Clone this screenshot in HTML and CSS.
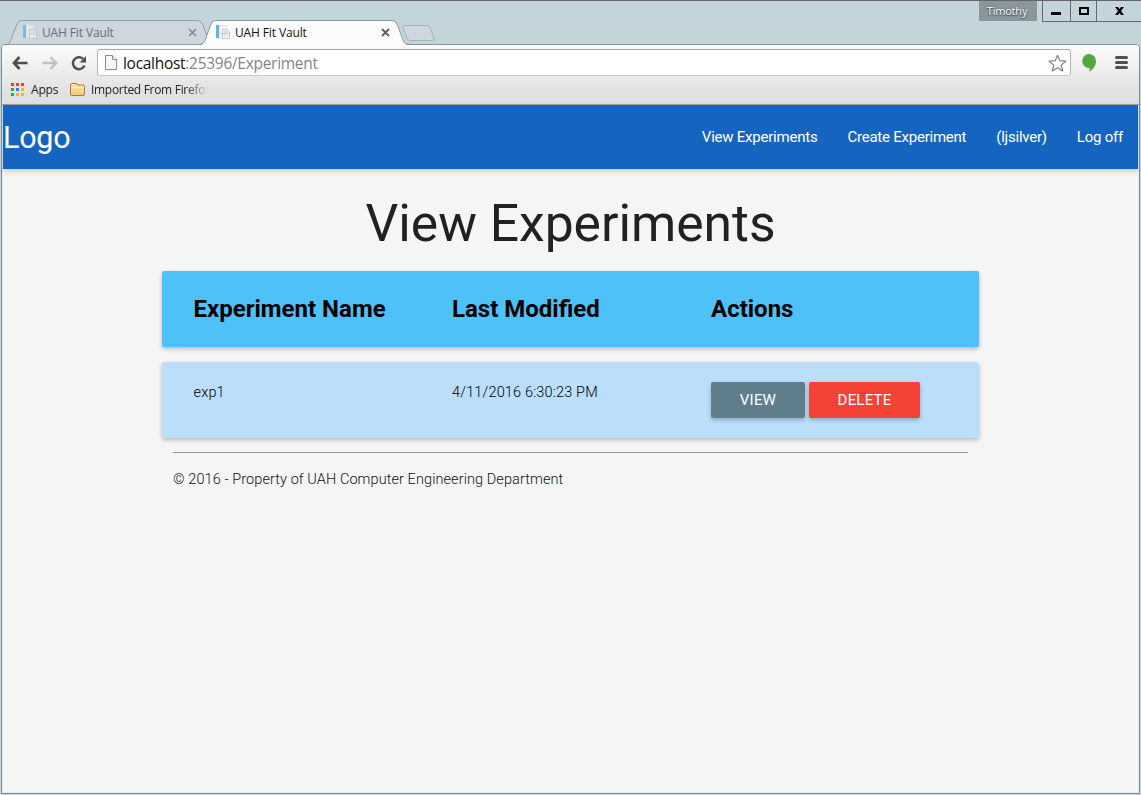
FILE: index.html
```html
<!DOCTYPE html>
<html lang="en">
<head>
<meta charset="utf-8">
<title>UAH Fit Vault</title>
<link rel="stylesheet" href="styles.css">
</head>
<body>
<div class="window">
  <header class="titlebar">
    <div class="tabs">
      <svg class="tab-shapes" width="445" height="26" viewBox="0 0 445 26">
        <path d="M404 5.500h23q2.500 0 3.300 2l3.500 10.500q.8 2.500-2 2.500h-21.500q-2.300 0-3.200-2l-4-10.500q-.9-2.500.9-2.500z" fill="#ced7df" stroke="#a3b0b8"/>
        <path d="M7.500 24.500q1.800-.5 3-4L17 4Q18.300.5 21.500.5H197q4 0 5.500 3.500L210 24.500z" fill="#ced6de" stroke="#8f9fa6"/>
        <path d="M200 25.500q3.500-1 5-5l5.500-15.500q1.700-4.500 5-4.500H392q3.500 0 5 3.500l6.500 17q1.500 3.500 5 4.500z" fill="#fcfcfc"/>
        <path d="M198 24.500h2q3.500 0 5-4l5.500-15.500q1.700-4.500 5-4.500H392q3.500 0 5 3.500l6.500 17q1.500 3.500 5 3.500H445" fill="none" stroke="#87979c"/>
      </svg>
      <div class="tab">
        <svg class="favicon" width="16" height="16" viewBox="0 0 16 16"><path d="M1 1h3v13H1z" fill="#85b6d6"/><path d="M4.500 1.500h7v12h-7z" fill="#e3e8ed" stroke="#d9dfe5"/><path d="M7.500 5.500h5l2 2v7h-7z" fill="#e5e9ee" stroke="#bfc7d0"/><path d="M9 8h4M6 10h7" stroke="#bdc8d2"/></svg>
        <span class="tab-name">UAH Fit Vault</span>
        <svg class="close" width="9" height="9" viewBox="0 0 9 9"><path d="M1 1l7 7M8 1L1 8" stroke="#81888d" stroke-width="1.600"/></svg>
      </div>
      <div class="tab tab-active">
        <svg class="favicon" width="16" height="16" viewBox="0 0 16 16"><path d="M1 1h3v13H1z" fill="#70afd5"/><path d="M4.500 1.500h7v12h-7z" fill="#f1f4f7" stroke="#dfe4e9"/><path d="M7.500 5.500h5l2 2v7h-7z" fill="#edf0f3" stroke="#c5ccd4"/><path d="M9 8h4M6 10h7" stroke="#bdc8d2"/></svg>
        <span class="tab-name">UAH Fit Vault</span>
        <svg class="close" width="9" height="9" viewBox="0 0 9 9"><path d="M1 1l7 7M8 1L1 8" stroke="#5c5c5c" stroke-width="1.800"/></svg>
      </div>
    </div>
    <div class="user">Timothy</div>
    <div class="controls">
      <span class="control minimize"><svg width="10" height="10" viewBox="0 0 10 10"><path d="M0 6h10v3H0z"/></svg></span>
      <span class="control maximize"><svg width="10" height="8" viewBox="0 0 10 8"><path d="M0 0h10v8H0zM2 2v4h6V2z" fill-rule="evenodd"/></svg></span>
      <span class="control quit"><svg width="9" height="8" viewBox="0 0 9 8"><path d="M0 0h3l1.500 2L6 0h3L6 4l3 4H6L4.500 6 3 8H0l3-4z"/></svg></span>
    </div>
  </header>
  <div class="frame">
    <div class="chrome">
      <div class="toolbar">
        <svg class="back" width="16" height="14" viewBox="0 0 16 14"><path d="M7.500 1L2 7l5.500 6M2 7h13.500" fill="none" stroke="#4d4d4d" stroke-width="2.700"/></svg>
        <svg class="forward" width="16" height="14" viewBox="0 0 16 14"><path d="M8.500 1L14 7l-5.500 6M14 7H.5" fill="none" stroke="#c1c1c1" stroke-width="2.500"/></svg>
        <svg class="reload" width="16" height="16" viewBox="0 0 16 16"><path d="M13.500 10.500A6 6 0 1 1 12 3.700" fill="none" stroke="#505050" stroke-width="2.500"/><path d="M15 1v6.500H8.500z" fill="#505050"/></svg>
        <div class="omnibox">
          <svg class="page-icon" width="12" height="15" viewBox="0 0 12 15"><path d="M.5.5h7l4 4v10H.5z" fill="#f7f7f7" stroke="#8b8b8b"/><path d="M7.500.5v4h4" fill="#fff" stroke="#8b8b8b"/></svg>
          <span class="url"><span class="host">localhost</span>:25396/Experiment</span>
          <svg class="star" width="19" height="18" viewBox="0 0 19 18"><path d="M9.500 1.200l2.300 5.500 6 .5-4.600 3.900 1.500 5.900-5.200-3.200L4.300 17l1.500-5.900L1.200 7.200l6-.5z" fill="#fff" stroke="#858585" stroke-width="1.200" stroke-linejoin="round"/></svg>
        </div>
        <svg class="hangouts" width="14" height="18" viewBox="0 0 14 18"><path d="M7 0a7 7 0 0 1 7 7c0 4.500-3 8-6.500 11v-4A7 7 0 1 1 7 0z" fill="#53a93f"/></svg>
        <svg class="menu" width="13" height="13" viewBox="0 0 13 13"><path d="M0 1.500Q0 0 1.500 0h10Q13 0 13 1.500T11.500 3h-10Q0 3 0 1.500M0 6.500Q0 5 1.500 5h10q1.500 0 1.500 1.500T11.500 8h-10Q0 8 0 6.500M0 11.500Q0 10 1.500 10h10q1.500 0 1.500 1.500T11.500 13h-10Q0 13 0 11.500" fill="#505050"/></svg>
      </div>
      <div class="bookmarks">
        <svg class="apps" width="13" height="13" viewBox="0 0 13 13"><path d="M0 0h3v3H0zM5 0h3v3H5zM10 0h3v3h-3z" fill="#ed3b3b"/><path d="M0 5h3v3H0zM0 10h3v3H0z" fill="#2da456"/><path d="M5 5h3v3H5z" fill="#2383f0"/><path d="M10 5h3v3h-3zM5 10h3v3H5zM10 10h3v3h-3z" fill="#f7b51b"/></svg>
        <span class="apps-label">Apps</span>
        <svg class="folder" width="15" height="13" viewBox="0 0 15 13"><defs><linearGradient id="paper" x2="0" y2="1"><stop stop-color="#ffe7a9"/><stop offset="1" stop-color="#f4c779"/></linearGradient></defs><path d="M.5 11V2Q.5.5 2 .5h4Q7.500.5 7.500 2H13q1.500 0 1.500 1.500V11q0 1.500-1.500 1.500H2Q.5 12.500.5 11z" fill="url(#paper)" stroke="#a9793b"/><path d="M1.500 4.500h12" stroke="#fff2cf"/></svg>
        <span class="folder-label">Imported From Firefox</span>
      </div>
    </div>
    <div class="page">
      <nav class="nav">
        <span class="logo">Logo</span>
        <span class="link link-view">View Experiments</span>
        <span class="link link-create">Create Experiment</span>
        <span class="link link-user">(ljsilver)</span>
        <span class="link link-logoff">Log off</span>
      </nav>
      <main class="container">
        <h1 class="title">View Experiments</h1>
        <section class="card card-head">
          <h2 class="heading heading-name">Experiment Name</h2>
          <h2 class="heading heading-date">Last Modified</h2>
          <h2 class="heading heading-actions">Actions</h2>
        </section>
        <section class="card card-row">
          <span class="cell">exp1</span>
          <span class="cell cell-date">4/11/2016 6:30:23 PM</span>
          <div class="actions"><span class="button view">VIEW</span><span class="button delete">DELETE</span></div>
        </section>
        <footer class="footer"><hr class="rule"><p class="copyright">© 2016 - Property of UAH Computer Engineering Department</p></footer>
      </main>
    </div>
  </div>
</div>
</body>
</html>
```
FILE: styles.css
```css
* { box-sizing: border-box; }
body { margin: 0; background: #c3d5db; font-family: Roboto, sans-serif; }
svg { display: block; flex: none; }
span { white-space: nowrap; }
.window { width: 1141px; height: 795px; overflow: hidden; display: flex; flex-direction: column; border-top: 1px solid #63636b; }
.titlebar { height: 43px; flex: none; display: flex; align-items: flex-start; font-family: "Open Sans", sans-serif; }
.tabs { position: relative; width: 979px; height: 43px; display: flex; padding-top: 19px; }
.tab-shapes { position: absolute; left: 0; top: 19px; }
.tab { position: relative; width: 193px; height: 24px; display: flex; align-items: center; padding-left: 22px; font-size: 12px; color: #687076; }
.tab-active { color: #111; }
.tab-name { margin-left: 4px; width: 146px; letter-spacing: -.13px; flex: none; }
.close { margin-top: 1px; }
.user { width: 58px; height: 20px; background: #89979b; color: #fff; font-size: 11px; line-height: 20px; text-align: center; text-shadow: 0 1px 1px #374248, 0 0 2px #4e5b60; letter-spacing: -.2px; padding-right: 2px; }
.controls { display: flex; margin-left: 5px; height: 21px; border-bottom: 1px solid #636873; }
.control { display: flex; align-items: center; justify-content: center; border-left: 1px solid #636873; }
.minimize { width: 28px; padding-right: 2px; }
.maximize { width: 26px; }
.quit { width: 45px; }
.frame { height: 750px; margin: 0 1px; border: 1px solid #7f9094; border-radius: 4px 4px 0 0; overflow: hidden; padding: 0 1px 1px 1px; background: #e5e9e9; flex: none; }
.chrome { height: 60px; margin: 0 -1px; background: linear-gradient(#fcfcfc, #e2e2e2 45px, #dfdfdf); border-bottom: 1px solid #a3a19c; font-family: "Open Sans", sans-serif; }
.toolbar { height: 31px; display: flex; align-items: center; padding: 4px 10px 0; }
.back { margin-top: 0; }
.forward { margin: 0 0 0 14px; }
.reload { margin: 0 10px 0 13px; }
.omnibox { width: 974px; height: 27px; display: flex; align-items: center; border: 1px solid #b5b5b5; border-top-color: #a3a3a3; border-bottom-color: #cacaca; border-radius: 3px; padding: 0 3px 0 7px; background: #fff; }
.url { flex: 1; margin-left: 6px; font-size: 15.500px; letter-spacing: -.29px; line-height: 24px; color: #858585; }
.host { color: #111; }
.hangouts { margin-left: 11px; margin-top: 1px; }
.menu { margin-left: 19px; }
.bookmarks { height: 28px; display: flex; align-items: center; padding: 0 8px 1px 9px; font-size: 12px; color: #242424; }
.apps-label { width: 28px; margin: 0 11px 0 7px; letter-spacing: -.2px; }
.folder-label { width: 119px; margin-left: 6px; letter-spacing: -.3px; -webkit-mask-image: linear-gradient(90deg, #000 95px, transparent 117px); mask-image: linear-gradient(90deg, #000 95px, transparent 117px); }
.page { height: 687px; background: #f5f5f5; }
.nav { height: 64px; background: #1565c0; color: #fff; display: flex; align-items: center; box-shadow: 0 2px 5px rgba(0,0,0,.2); font-size: 15px; letter-spacing: -.23px; }
.logo { font-size: 30.500px; flex: 1; }
.link { margin-right: 30px; }
.link-logoff { margin-right: 15px; }
.container { width: 817px; margin: 0 auto; }
.title { margin: 0; height: 102px; padding-top: 21px; text-align: center; font-size: 51.600px; line-height: 68px; font-weight: 400; color: #212121; }
.card { height: 76px; display: grid; grid-template-columns: 258.500px 259px 1fr; padding: 20px 31px 20px 31.500px; margin-bottom: 15px; border-radius: 2px; box-shadow: 0 2px 4px rgba(0,0,0,.25); color: #000; }
.card-head { background: #4fc1f9; }
.heading { margin: 0; font-size: 24px; line-height: 36px; font-weight: 700; }
.card-row { background: #bbdefb; margin-bottom: 14px; }
.cell { font-size: 14.500px; line-height: 21px; font-weight: 300; letter-spacing: .16px; }
.actions { display: flex; gap: 4px; }
.button { height: 36px; border-radius: 2px; color: #fff; text-align: center; font-size: 15px; line-height: 36px; box-shadow: 0 2px 4px rgba(0,0,0,.25); letter-spacing: .2px; }
.view { width: 94px; background: #607d8b; }
.delete { width: 111px; background: #f44336; }
.footer { margin: 0 11px; color: #111; }
.rule { height: 1px; border: 0; background: #999; margin: 0; }
.copyright { margin: 15px 0 0; font-size: 14.500px; line-height: 24px; font-weight: 300; letter-spacing: .08px; }
```
